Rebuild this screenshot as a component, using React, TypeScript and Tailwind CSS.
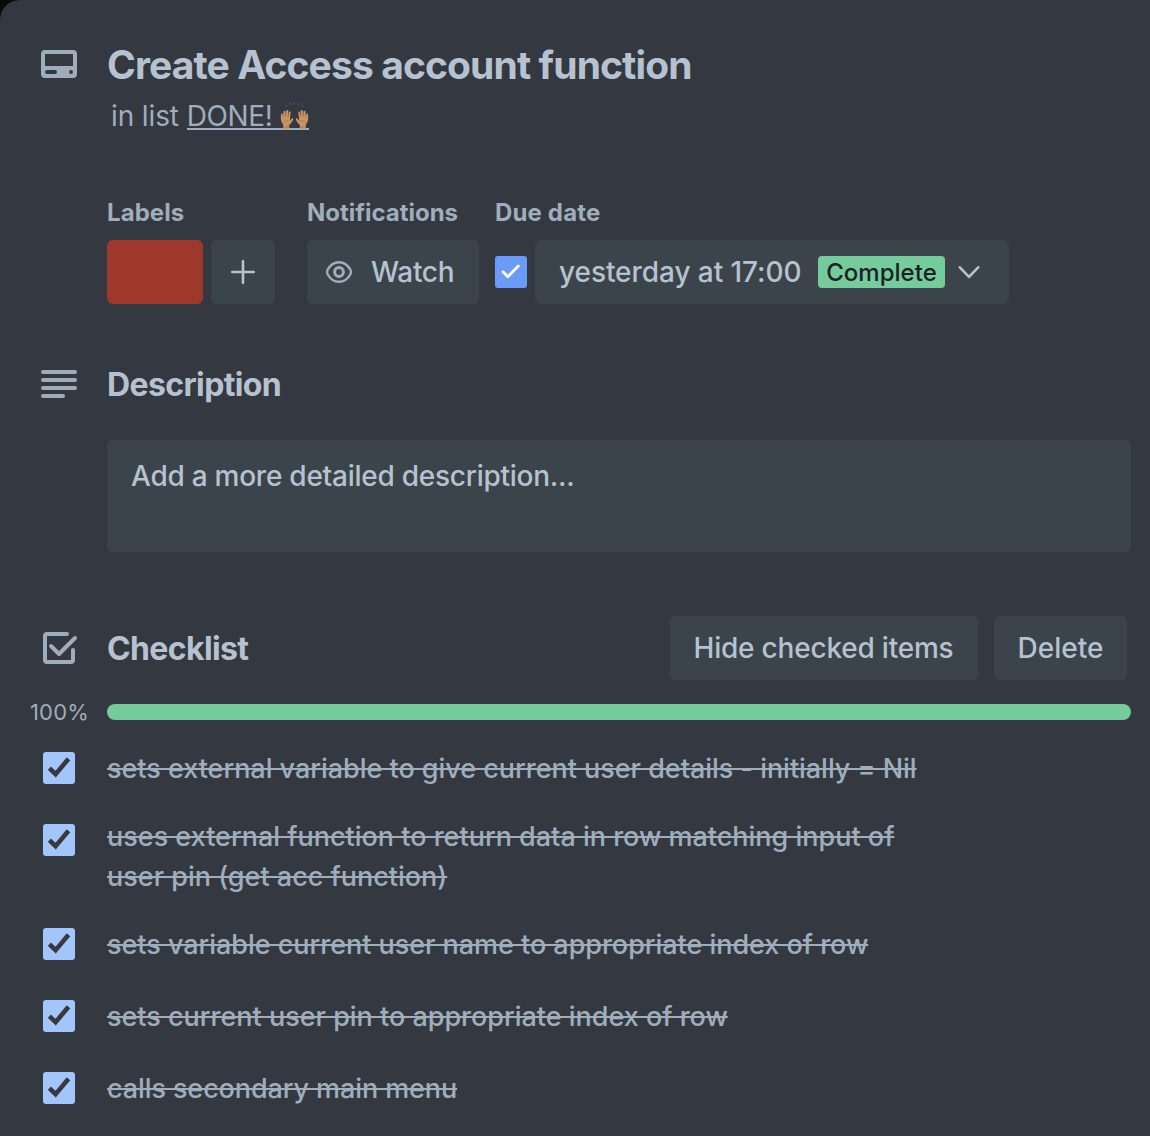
import type { ReactNode } from "react";

function CardIcon() {
  return (
    <svg width="36" height="28" viewBox="0 0 36 28" fill="#9fadbc" fillRule="evenodd">
      <path d="M4 0h28a4 4 0 0 1 4 4v20a4 4 0 0 1-4 4H4a4 4 0 0 1-4-4V4a4 4 0 0 1 4-4ZM4 4v12h28V4ZM6 20a2 2 0 0 0 0 4h8a2 2 0 0 0 0-4ZM30 20a2 2 0 1 0 0 4a2 2 0 0 0 0-4Z" />
    </svg>
  );
}

function LinesIcon() {
  return (
    <svg width="36" height="28" viewBox="0 0 36 28" stroke="#9fadbc" strokeWidth="4" strokeLinecap="round">
      <path d="M2 2h32M2 10h32M2 18h32M2 26h20" />
    </svg>
  );
}

function ChecklistIcon() {
  return (
    <svg width="36" height="32" viewBox="0 0 36 32" fill="none" stroke="#9fadbc" strokeWidth="4" strokeLinecap="round" strokeLinejoin="round">
      <path d="M24 2H4a2 2 0 0 0-2 2v24a2 2 0 0 0 2 2h24a2 2 0 0 0 2-2V18" />
      <path d="M8 14l8 8L32 6" />
    </svg>
  );
}

function EyeIcon() {
  return (
    <svg width="28" height="24" viewBox="0 0 28 24" fill="none" stroke="#9fadbc" strokeWidth="2.4">
      <path d="M14 2.2c5.6 0 9 3.2 11.4 7.6.8 1.5.8 2.9 0 4.4C23 18.6 19.6 21.8 14 21.8S5 18.6 2.6 14.2c-.8-1.5-.8-2.9 0-4.4C5 5.4 8.4 2.2 14 2.2Z" />
      <circle cx="14" cy="12" r="4.4" strokeWidth="3" />
    </svg>
  );
}

function Hand() {
  return (
    <>
      <path d="M3.2 28V22.5C1.5 20 .8 17.5.8 14.5c0-1.800 0-3.700.4-4.500.5-.8 1.500-.5 1.600.4L3 13l.5-6c.1-1.300 1.900-1.300 2 0l.2 5 .6-6c.2-1.200 1.900-1.100 2 .1l-.1 6.100.8-4.400c.3-1.100 1.800-.9 1.700.3L10 15l-.1 3 1.400-2.200c.7-1 2.100-.9 1.900.3-.5 2.600-2.200 5.200-4 7V28Z" fill="#c79465" />
      <path d="M3.300 8v6M5.900 8v5.500M8.300 9v5M4 19c2-1.500 3.500-1.500 5 .3M4 25.500h4.800" stroke="#99683f" strokeWidth=".6" fill="none" />
    </>
  );
}

function RaisedHands() {
  return (
    <svg className="-mb-[2px]" width="29" height="29" viewBox="0 0 29 29" role="img" aria-label="raised hands">
      <path d="M6 4l1 1.300M10.300 2l.5 1.600M14.500 1.600v1.400M18.700 2l-.5 1.600M23 4l-1 1.300" stroke="#555c64" strokeWidth="1.2" />
      <g transform="translate(0 4.600) scale(1 .84)"><Hand /></g>
      <g transform="translate(29 4.600) scale(-1 .84)"><Hand /></g>
    </svg>
  );
}

function SectionTitle({ children }: { children: ReactNode }) {
  return <h2 className="pt-[2px] text-[32px] leading-10 font-bold tracking-[-0.62px]">{children}</h2>;
}

const items: { lines: string[]; tracking: string }[] = [
  { lines: ["sets external variable to give current user details - initially = Nil"], tracking: "tracking-[-0.03px]" },
  { lines: ["uses external function to return data in row matching input of", "user pin (get acc function)"], tracking: "tracking-[-0.005px]" },
  { lines: ["sets variable current user name to appropriate index of row"], tracking: "tracking-[-0.035px]" },
  { lines: ["sets current user pin to appropriate index of row"], tracking: "tracking-[-0.015px]" },
  { lines: ["calls secondary main menu"], tracking: "tracking-[-0.1px]" },
];

export default function App() {
  return (
    <div className="h-[1136px] w-[1150px] overflow-hidden bg-[#080b08]">
      <main className="h-full rounded-tl-[20px] bg-[#343840] pt-10 font-['Inter',sans-serif] text-[#b6c2cf]">
        <header className="flex">
          <div className="w-[107px] shrink-0 pt-[10px] pl-[41px]"><CardIcon /></div>
          <div>
            <h1 className="h-12 text-[39px] leading-[50px] font-bold tracking-[-0.89px] whitespace-nowrap">Create Access account function</h1>
            <p className="mt-2 h-10 pl-1 text-[28px] leading-10 tracking-[-0.12px] whitespace-nowrap text-[#9fadbc]">
              in list{" "}
              <a className="inline-flex h-[34px] items-end border-b-2 border-[#9fadbc] align-top tracking-[-0.35px]">
                <span className="-mb-[8px] leading-10 whitespace-pre">DONE! </span>
                <RaisedHands />
              </a>
            </p>
          </div>
        </header>

        <section className="mt-[60px] flex pl-[107px]">
          <div className="w-[200px]">
            <h3 className="h-11 text-[24px] leading-[34px] font-bold tracking-[0.08px] text-[#9fadbc]">Labels</h3>
            <div className="flex gap-2">
              <div className="h-16 w-24 rounded-md bg-[#9e382b]" />
              <button className="flex h-16 w-16 items-center justify-center rounded-md bg-[#3c444b]">
                <svg width="24" height="24" viewBox="0 0 24 24" stroke="#b6c2cf" strokeWidth="2.6" strokeLinecap="round"><path d="M12 1.300v21.400M1.300 12h21.400" /></svg>
              </button>
            </div>
          </div>
          <div className="w-[188px]">
            <h3 className="h-11 text-[24px] leading-[34px] font-bold tracking-[-0.02px] text-[#9fadbc]">Notifications</h3>
            <button className="flex h-16 w-[172px] items-center rounded-md bg-[#3c444b] pl-[18px]">
              <EyeIcon />
              <span className="ml-[18px] text-[28px] font-medium tracking-[-0.3px]">Watch</span>
            </button>
          </div>
          <div>
            <h3 className="h-11 text-[24px] leading-[34px] font-bold tracking-[0.15px] text-[#9fadbc]">Due date</h3>
            <div className="flex items-center gap-2">
              <div className="flex h-8 w-8 items-center justify-center rounded-[3px] bg-[#6a9bf9]">
                <svg width="20" height="16" viewBox="0 0 20 16" fill="none" stroke="#fff" strokeWidth="2.8" strokeLinecap="round" strokeLinejoin="round"><path d="M2 7.800l4.800 5L17.300 2" /></svg>
              </div>
              <button className="flex h-16 w-[474px] items-center rounded-md bg-[#3c444b] pl-6">
                <span className="w-[259px] text-left text-[28px] font-medium tracking-[-0.06px] whitespace-nowrap">yesterday at 17:00</span>
                <span className="flex h-8 w-[127px] items-center justify-center rounded-[4px] bg-[#74cb9b] pt-[2px] text-[24px] font-medium tracking-[0.02px] text-[#1d2125]">Complete</span>
                <svg className="ml-[13px]" width="22" height="14" viewBox="0 0 22 14" fill="none" stroke="#b6c2cf" strokeWidth="2.6" strokeLinecap="round" strokeLinejoin="round"><path d="M1.800 2.300L11 11.800l9.200-9.500" /></svg>
              </button>
            </div>
          </div>
        </section>

        <section className="mt-[60px]">
          <div className="flex h-10 items-center">
            <div className="w-[107px] pl-[41px]"><LinesIcon /></div>
            <SectionTitle>Description</SectionTitle>
          </div>
          <div className="mt-9 ml-[107px] h-28 w-[1024px] rounded-md bg-[#3c444b] px-6 py-4 text-[28px] leading-10 font-medium tracking-[-0.25px]">
            Add a more detailed description...
          </div>
        </section>

        <section className="mt-16">
          <div className="flex h-16 items-center">
            <div className="w-[107px] pl-[43px]"><ChecklistIcon /></div>
            <SectionTitle>Checklist</SectionTitle>
            <div className="mr-[23px] ml-auto flex gap-4 text-[28px] font-medium">
              <button className="h-16 w-[308px] rounded-md bg-[#3c444b] pr-[1px] tracking-[-0.205px]">Hide checked items</button>
              <button className="h-16 w-[133px] rounded-md bg-[#3c444b] tracking-[0.02px]">Delete</button>
            </div>
          </div>
          <div className="mt-6 flex h-4 items-center">
            <span className="w-[107px] pl-[30px] text-[22px] tracking-[0.15px] text-[#9fadbc]">100%</span>
            <div className="h-4 w-[1024px] rounded-full bg-[#74cb9b]" />
          </div>
          <ul className="mt-3">
            {items.map(({ lines, tracking }) => (
              <li key={lines[0]} className="flex">
                <div className="w-[107px] pt-5 pl-[43px]">
                  <div className="h-8 w-8 rounded-[3px] bg-[#a2c5fc]">
                    <svg width="32" height="32" viewBox="0 0 32 32" fill="none" stroke="#39393b" strokeWidth="4.6"><path d="M6.400 16.200l6.200 6L25.500 6.800" /></svg>
                  </div>
                </div>
                <div className={`${lines.length > 1 ? "pt-[13px] pb-[11px]" : "pt-[17px] pb-[15px]"} ${tracking} text-[27px] leading-10 font-medium whitespace-nowrap text-[#9fadbc]`}>
                  {lines.map((line) => (
                    <p key={line} className="line-through decoration-2">{line}</p>
                  ))}
                </div>
              </li>
            ))}
          </ul>
        </section>
      </main>
    </div>
  );
}
